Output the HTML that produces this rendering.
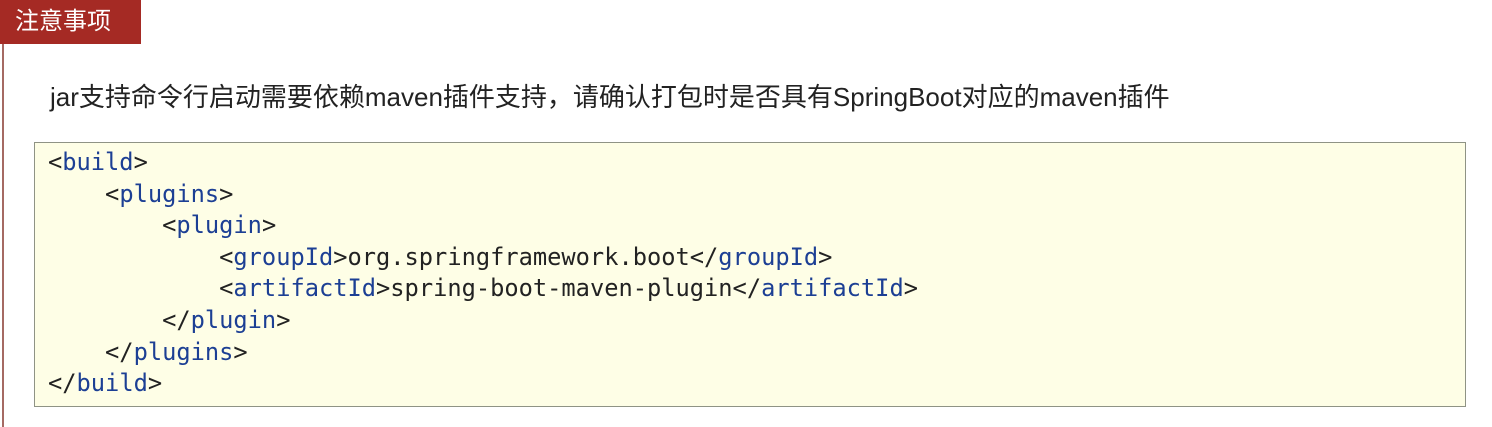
<!DOCTYPE html>
<html><head><meta charset="utf-8"><style>
html,body{margin:0;padding:0;background:#fff;width:1492px;height:427px;overflow:hidden;position:relative}
.tag{position:absolute;left:0;top:0;width:141px;height:44px;background:#a52a24;color:#fff;font:24px "Liberation Sans","Noto Sans CJK SC",sans-serif;line-height:44px;padding-left:15px;box-sizing:border-box}
.vline{position:absolute;left:2px;top:44px;width:2px;height:383px;background:#a56a63}
.txt{position:absolute;left:50px;top:80px;font:26px "Liberation Sans","Noto Sans CJK SC",sans-serif;color:#222;line-height:34px;white-space:nowrap}
.code{position:absolute;left:34px;top:142px;width:1432px;height:265px;box-sizing:border-box;background:#fefee6;border:1.5px solid #8f9385}
pre{margin:0;position:absolute;left:13px;top:4px;font:23.7px "DejaVu Sans Mono",monospace;line-height:31.6px;color:#222}
b{font-weight:normal;color:#1c3f94}
</style></head><body>
<div class="tag">注意事项</div>
<div class="vline"></div>
<div class="txt">jar支持命令行启动需要依赖maven插件支持，请确认打包时是否具有SpringBoot对应的maven插件</div>
<div class="code"><pre>&lt;<b>build</b>&gt;
    &lt;<b>plugins</b>&gt;
        &lt;<b>plugin</b>&gt;
            &lt;<b>groupId</b>&gt;org.springframework.boot&lt;/<b>groupId</b>&gt;
            &lt;<b>artifactId</b>&gt;spring-boot-maven-plugin&lt;/<b>artifactId</b>&gt;
        &lt;/<b>plugin</b>&gt;
    &lt;/<b>plugins</b>&gt;
&lt;/<b>build</b>&gt;</pre></div>
</body></html>
